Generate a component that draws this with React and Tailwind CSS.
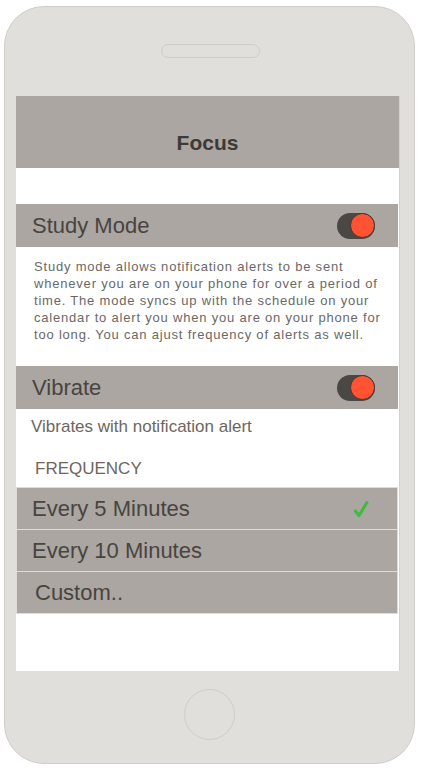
const font = { fontFamily: '"Liberation Sans", Arial, sans-serif' };

function Toggle() {
  return (
    <div className="relative w-[38px] h-[26px] rounded-full bg-[#4a4744]">
      <div className="absolute right-0 top-0 w-[25px] h-[25px] rounded-full border border-[#3d3a37] bg-[#ff5333]" />
    </div>
  );
}

function SettingBar({ label }) {
  return (
    <div className="w-[382px] h-[43px] bg-[#aba6a2] flex items-center justify-between pl-[16px] pr-[23px]">
      <span className="text-[22px] leading-none text-[#48443f]">{label}</span>
      <Toggle />
    </div>
  );
}

function FrequencyRow({ label, checked, indent }) {
  return (
    <div
      className={`w-[382px] h-[42px] bg-[#aba6a2] border border-b-0 border-[#dedcd8] flex items-center justify-between pr-[28px] ${
        indent ? "pl-[18px]" : "pl-[15px]"
      }`}
    >
      <span className="text-[22px] leading-none text-[#48443f]">{label}</span>
      {checked && (
        <svg width="16" height="17" viewBox="0 0 16 17">
          <path
            d="M1.5 10 L6 15.5 L14.5 1.5"
            fill="none"
            stroke="#3dbb3d"
            strokeWidth="3"
            strokeLinejoin="round"
          />
        </svg>
      )}
    </div>
  );
}

export default function App() {
  const lines = [
    "Study mode allows notification alerts to be sent",
    "whenever you are on your phone for over a period of",
    "time. The mode syncs up with the schedule on your",
    "calendar to alert you when you are on your phone for",
    "too long. You can ajust frequency of alerts as well.",
  ];

  return (
    <div className="w-[422px] h-[769px] bg-white pt-[6px] pl-[4px]" style={font}>
      <div className="w-[411px] h-[758px] rounded-[40px] border border-[#cfcdc8] bg-[#e0dfdb] flex flex-col">
        <div className="self-center ml-[2px] mt-[37px] w-[99px] h-[14px] rounded-full border border-[#cfcdc8]" />
        <div className="ml-[11px] mt-[38px] w-[384px] h-[575px] bg-white border-r border-[#d3d1cd] flex flex-col">
          <div className="w-[383px] h-[72px] bg-[#aba6a2] pt-[21px] flex items-center justify-center">
            <span className="text-[21px] font-bold leading-none text-[#3d3a36]">Focus</span>
          </div>

          <div className="mt-[36px]">
            <SettingBar label="Study Mode" />
          </div>

          <div className="pl-[18px] pt-[11px] text-[13px] leading-[17px] tracking-[0.8px] text-[#6b6866]">
            {lines.map((l) => (
              <div key={l} className="whitespace-nowrap">
                {l}
              </div>
            ))}
          </div>

          <div className="mt-[23px]">
            <SettingBar label="Vibrate" />
          </div>

          <div className="pl-[15px] pt-[8px] text-[17px] leading-[20px] text-[#6e665e]">
            Vibrates with notification alert
          </div>

          <div className="pl-[19px] pt-[22px] text-[17px] leading-[20px] text-[#6e665e] uppercase">
            Frequency
          </div>

          <div className="mt-[8px] border-b border-[#dedcd8] w-[382px]">
            <FrequencyRow label="Every 5 Minutes" checked />
            <FrequencyRow label="Every 10 Minutes" />
            <FrequencyRow label="Custom.." indent />
          </div>
        </div>
        <div className="self-center mt-[18px] w-[51px] h-[51px] rounded-full border border-[#cfcdc8]" />
      </div>
    </div>
  );
}
